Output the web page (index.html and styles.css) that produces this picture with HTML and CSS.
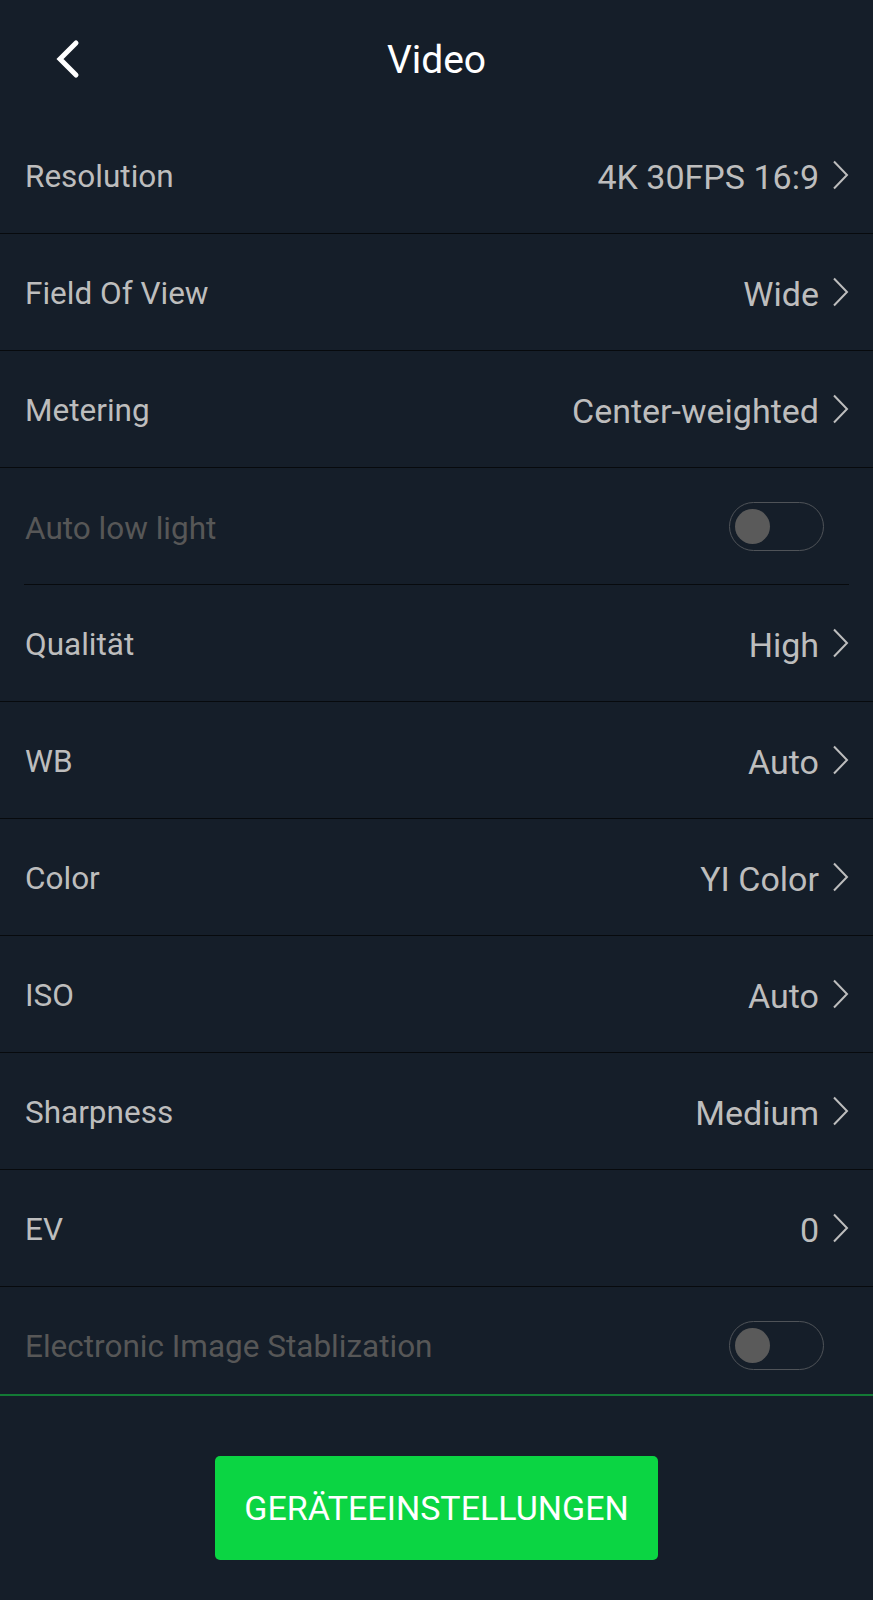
FILE: index.html
```html
<!DOCTYPE html>
<html>
<head>
<meta charset="utf-8">
<link rel="stylesheet" href="styles.css">
</head>
<body>
<div class="app">
  <header class="header">
    <svg class="back" width="30" height="40" viewBox="0 0 30 40"><path d="M24 4 L8 20 L24 36" fill="none" stroke="#fff" stroke-width="5" stroke-linecap="round" stroke-linejoin="miter"/></svg>
    <div class="title">Video</div>
  </header>
  <div class="list">
    <div class="row"><span class="label">Resolution</span><span class="value">4K 30FPS 16:9<svg class="chev" width="17" height="30" viewBox="0 0 17 30"><path d="M2 1.5 L15 15 L2 28.5" fill="none" stroke="#bdbdbd" stroke-width="2"/></svg></span></div>
    <div class="row"><span class="label">Field Of View</span><span class="value">Wide<svg class="chev" width="17" height="30" viewBox="0 0 17 30"><path d="M2 1.5 L15 15 L2 28.5" fill="none" stroke="#bdbdbd" stroke-width="2"/></svg></span></div>
    <div class="row"><span class="label">Metering</span><span class="value">Center-weighted<svg class="chev" width="17" height="30" viewBox="0 0 17 30"><path d="M2 1.5 L15 15 L2 28.5" fill="none" stroke="#bdbdbd" stroke-width="2"/></svg></span></div>
    <div class="row row-inset"><span class="label disabled">Auto low light</span><span class="toggle"><span class="knob"></span></span></div>
    <div class="row"><span class="label">Qualität</span><span class="value">High<svg class="chev" width="17" height="30" viewBox="0 0 17 30"><path d="M2 1.5 L15 15 L2 28.5" fill="none" stroke="#bdbdbd" stroke-width="2"/></svg></span></div>
    <div class="row"><span class="label">WB</span><span class="value">Auto<svg class="chev" width="17" height="30" viewBox="0 0 17 30"><path d="M2 1.5 L15 15 L2 28.5" fill="none" stroke="#bdbdbd" stroke-width="2"/></svg></span></div>
    <div class="row"><span class="label">Color</span><span class="value">YI Color<svg class="chev" width="17" height="30" viewBox="0 0 17 30"><path d="M2 1.5 L15 15 L2 28.5" fill="none" stroke="#bdbdbd" stroke-width="2"/></svg></span></div>
    <div class="row"><span class="label">ISO</span><span class="value">Auto<svg class="chev" width="17" height="30" viewBox="0 0 17 30"><path d="M2 1.5 L15 15 L2 28.5" fill="none" stroke="#bdbdbd" stroke-width="2"/></svg></span></div>
    <div class="row"><span class="label">Sharpness</span><span class="value">Medium<svg class="chev" width="17" height="30" viewBox="0 0 17 30"><path d="M2 1.5 L15 15 L2 28.5" fill="none" stroke="#bdbdbd" stroke-width="2"/></svg></span></div>
    <div class="row"><span class="label">EV</span><span class="value">0<svg class="chev" width="17" height="30" viewBox="0 0 17 30"><path d="M2 1.5 L15 15 L2 28.5" fill="none" stroke="#bdbdbd" stroke-width="2"/></svg></span></div>
    <div class="row row-last"><span class="label disabled">Electronic Image Stablization</span><span class="toggle"><span class="knob"></span></span></div>
  </div>
  <footer class="footer">
    <div class="button">GERÄTEEINSTELLUNGEN</div>
  </footer>
</div>
</body>
</html>
```

FILE: styles.css
```css
html, body {
  margin: 0;
  padding: 0;
  background: #151e29;
}
body {
  font-family: Roboto, "Noto Sans", sans-serif;
}
.app {
  width: 873px;
  height: 1600px;
  display: flex;
  flex-direction: column;
  background: #151e29;
  overflow: hidden;
}
.header {
  height: 117px;
  display: flex;
  align-items: center;
  justify-content: center;
  position: relative;
  flex-shrink: 0;
}
.back {
  position: absolute;
  left: 52px;
  top: 39px;
}
.title {
  color: #ffffff;
  font-size: 39px;
  padding-top: 3px;
}
.list {
  height: 1277px;
  overflow: hidden;
  flex-shrink: 0;
}
.row {
  height: 116px;
  border-bottom: 1px solid #070a0d;
  display: flex;
  align-items: center;
  justify-content: space-between;
  padding: 0 24px;
}
.row-inset {
  border-bottom: none;
  position: relative;
  height: 117px;
}
.row-inset::after {
  content: "";
  position: absolute;
  left: 24px;
  right: 24px;
  bottom: 0;
  height: 1px;
  background: #070a0d;
}
.label {
  color: #bdbdbd;
  font-size: 31.5px;
  padding-left: 1px;
  padding-top: 3px;
}
.label.disabled {
  color: #575757;
}
.value {
  color: #bdbdbd;
  font-size: 34px;
  display: flex;
  align-items: center;
  padding-top: 3px;
}
.chev {
  margin-left: 13px;
  margin-top: -3px;
}
.toggle {
  width: 88px;
  height: 47px;
  border: 1.5px solid #4f5358;
  border-radius: 26px;
  margin-right: 25px;
  display: flex;
  align-items: center;
  padding-left: 5px;
  box-sizing: content-box;
}
.knob {
  width: 35px;
  height: 35px;
  border-radius: 50%;
  background: #5a5a5a;
}
.footer {
  border-top: 2px solid #137a35;
  flex: 1;
  display: flex;
  justify-content: center;
  padding-top: 60px;
}
.button {
  width: 443px;
  height: 104px;
  background: #0bd543;
  border-radius: 5px;
  color: #ffffff;
  font-size: 34px;
  display: flex;
  align-items: center;
  justify-content: center;
}
```
